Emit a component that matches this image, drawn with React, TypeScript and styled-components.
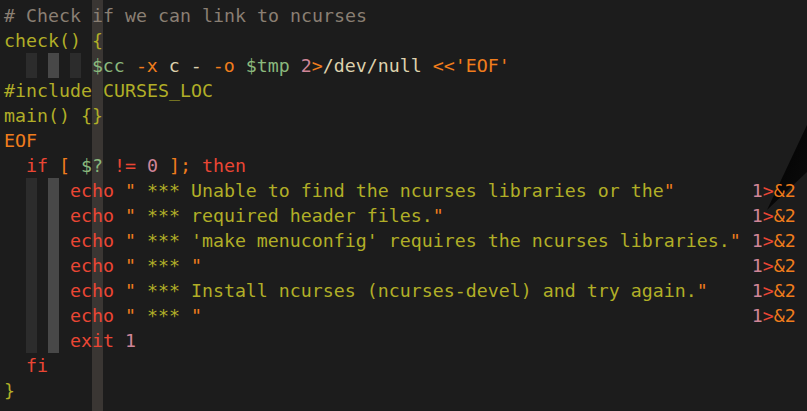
import React from "react";
import styled, { createGlobalStyle } from "styled-components";

const Global = createGlobalStyle`
  html, body { margin: 0; padding: 0; background: #1c1c1c; }
  body { overflow: hidden; }
`;

const COLORS: Record<string, string> = {
  c: "#8a7f73",
  g: "#b1ae27",
  a: "#8ab87c",
  o: "#f07d1c",
  p: "#cf8598",
  r: "#ea4634",
  f: "#ddd1ad",
};

const SHADES: Record<string, string> = {
  d: "#2c2c2c",
  l: "#484848",
};

const Editor = styled.div`
  position: relative;
  isolation: isolate;
  width: 807px;
  height: 411px;
  overflow: hidden;
  box-sizing: border-box;
  padding: 3px 0 0 4px;
  background: #1c1c1c;
  font-family: "DejaVu Sans Mono", "Liberation Mono", monospace;
  font-size: 18.27px;
  display: flex;
  flex-direction: column;
`;

const CursorColumn = styled.div<{ $col: number }>`
  position: absolute;
  z-index: -1;
  top: 0;
  bottom: 0;
  left: calc(4px + ${(p) => p.$col}ch);
  width: 1ch;
  background: #3a3633;
`;

const Wedge = styled.svg`
  position: absolute;
  z-index: -1;
  top: 0;
  right: 0;
`;

const Line = styled.div`
  height: 25px;
  line-height: 25px;
  display: flex;
  align-items: stretch;
  white-space: pre;
`;

const Cell = styled.span<{ $shade?: string }>`
  display: inline-block;
  width: 1ch;
  background: ${(p) => (p.$shade ? SHADES[p.$shade] : "transparent")};
`;

const Token = styled.span<{ $c: string }>`
  color: ${(p) => COLORS[p.$c]};
`;

type Tok = [string, string];
type Row = { indent?: string; toks: Tok[] };

const ECHO_COL = 68;
const echoLine = (msg: string): Row => {
  const content = `echo "${msg}"`;
  const pad = " ".repeat(Math.max(1, ECHO_COL - 6 - content.length));
  return {
    indent: "  d l ",
    toks: [
      ["r", "echo"],
      ["f", " "],
      ["o", '"'],
      ["g", msg],
      ["o", '"'],
      ["f", pad],
      ["p", "1"],
      ["r", ">"],
      ["o", "&2"],
    ],
  };
};

const rows: Row[] = [
  { toks: [["c", "# Check if we can link to ncurses"]] },
  { toks: [["g", "check() {"]] },
  {
    indent: "  d l d ",
    toks: [
      ["a", "$cc"],
      ["f", " "],
      ["o", "-x"],
      ["f", " c - "],
      ["o", "-o"],
      ["f", " "],
      ["a", "$tmp"],
      ["f", " "],
      ["p", "2"],
      ["o", ">"],
      ["f", "/dev/null "],
      ["o", "<<'EOF'"],
    ],
  },
  { toks: [["g", "#include CURSES_LOC"]] },
  { toks: [["g", "main() {}"]] },
  { toks: [["o", "EOF"]] },
  {
    toks: [
      ["f", "  "],
      ["r", "if"],
      ["f", " "],
      ["o", "["],
      ["f", " "],
      ["a", "$?"],
      ["f", " "],
      ["r", "!="],
      ["f", " "],
      ["p", "0"],
      ["f", " "],
      ["o", "];"],
      ["f", " "],
      ["r", "then"],
    ],
  },
  echoLine(" *** Unable to find the ncurses libraries or the"),
  echoLine(" *** required header files."),
  echoLine(" *** 'make menuconfig' requires the ncurses libraries."),
  echoLine(" *** "),
  echoLine(" *** Install ncurses (ncurses-devel) and try again."),
  echoLine(" *** "),
  {
    indent: "  d l ",
    toks: [
      ["r", "exit"],
      ["f", " "],
      ["p", "1"],
    ],
  },
  { toks: [["f", "  "], ["r", "fi"]] },
  { toks: [["g", "}"]] },
];

export default function App() {
  return (
    <>
      <Global />
      <Editor>
        <CursorColumn $col={8} />
        <Wedge width="60" height="230" viewBox="0 0 60 230">
          <defs>
            <linearGradient id="wg" x1="0" y1="0" x2="1" y2="1">
              <stop offset="0" stopColor="#000" />
              <stop offset="1" stopColor="#0c0c0c" />
            </linearGradient>
          </defs>
          <polygon points="60,125 20,210 60,172" fill="url(#wg)" />
        </Wedge>
        {rows.map((row, i) => (
          <Line key={i}>
            {row.indent &&
              row.indent.split("").map((ch, j) => (
                <Cell key={j} $shade={ch === " " ? undefined : ch} />
              ))}
            {row.toks.map(([c, t], j) => (
              <Token key={j} $c={c}>
                {t}
              </Token>
            ))}
          </Line>
        ))}
      </Editor>
    </>
  );
}
